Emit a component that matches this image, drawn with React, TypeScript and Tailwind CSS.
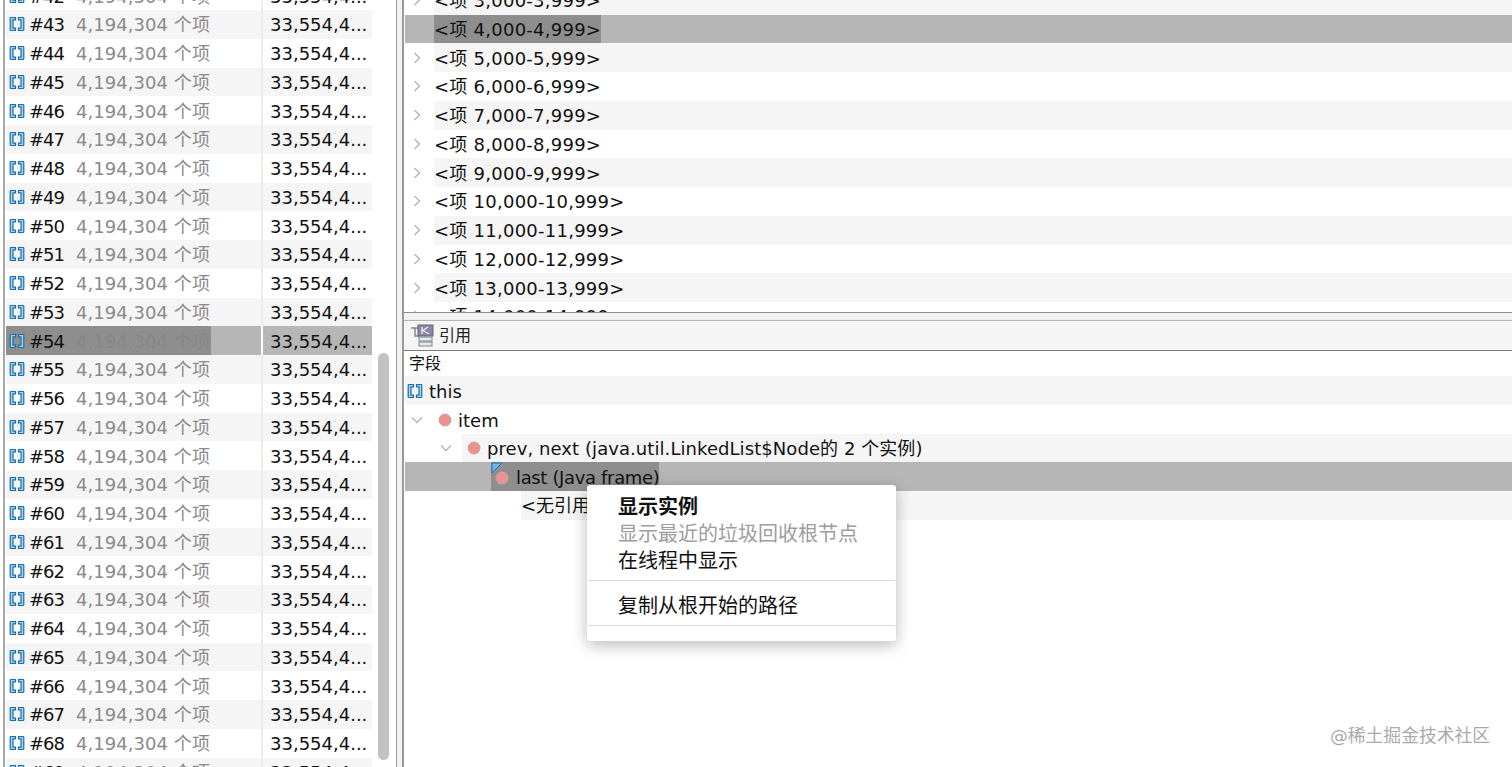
const leftRows = Array.from({ length: 28 }, (_, i) => 42 + i)
const treeRows = [3, 4, 5, 6, 7, 8, 9, 10, 11, 12, 13, 14]

function ArrayIcon() {
  return (
    <svg width="16" height="16" viewBox="0 0 16 16" fill="none" className="shrink-0">
      <path d="M6.5 1.5H2a.8.8 0 0 0-.8.8v11.4a.8.8 0 0 0 .8.8h4.5v-2.3H4V3.8h2.5z" fill="#9fd2ef" stroke="#1d6ea8" strokeWidth="1.2" />
      <path d="M9.5 1.5H14a.8.8 0 0 1 .8.8v11.4a.8.8 0 0 1-.8.8H9.5v-2.3H12V3.8H9.5z" fill="#9fd2ef" stroke="#1d6ea8" strokeWidth="1.2" />
    </svg>
  )
}

function Dot() {
  return (
    <svg width="14" height="14" viewBox="0 0 14 14" className="shrink-0">
      <circle cx="7" cy="7" r="5.8" fill="#f0908e" stroke="#c5a3a3" strokeWidth="1.2" />
    </svg>
  )
}

function Chevron({ open }: { open?: boolean }) {
  return (
    <svg width="12" height="12" viewBox="0 0 12 12" fill="none" stroke="#b4b4b4" strokeWidth="1.4" className="shrink-0">
      {open ? <path d="M1 3.5 6 8.5 11 3.5" /> : <path d="M3.5 1 8.5 6 3.5 11" />}
    </svg>
  )
}

function RefsIcon() {
  return (
    <svg width="24" height="24" viewBox="0 0 24 24" className="shrink-0">
      <path d="M1 4h8M5 4v8h4" fill="none" stroke="#7a8791" strokeWidth="1.4" />
      <rect x="8" y="1" width="15" height="11" fill="#8f84a6" stroke="#5f6670" />
      <path d="M12 3v7M18 3l-5 3.5 6 3.5" fill="none" stroke="#e8eef5" strokeWidth="1.4" />
      <rect x="9" y="13" width="13" height="4" fill="#e6e9ec" stroke="#7d868d" />
      <rect x="9" y="18" width="13" height="4" fill="#e6e9ec" stroke="#7d868d" />
    </svg>
  )
}

function LeftRow({ n }: { n: number }) {
  const selected = n === 54
  const band = n % 2 === 1 ? "bg-[#f5f5f5]" : "bg-white"
  return (
    <div className="flex h-[28.75px] shrink-0 items-center">
      <div className={`flex h-full w-[205px] items-center pl-[3px] ${selected ? "bg-[#8e8e8e]" : band}`}>
        <ArrayIcon />
        <span className="ml-[4px] mt-[2px] w-[47px] tracking-[-1px] text-[#111]">#{n}</span>
        <span className={`mt-[2px] tracking-[0.05px] ${selected ? "text-[#878787]" : "text-[#8a8a8a]"}`}>4,194,304 个项</span>
      </div>
      <div className={`h-full w-[50px] ${selected ? "bg-[#b6b6b6]" : band}`} />
      <div className={`h-full w-[2px] ${selected ? "bg-white" : "bg-[#ececec]"}`} />
      <div className={`flex h-full w-[109px] items-center pl-[7px] pt-[2px] text-[#111] ${selected ? "bg-[#b6b6b6]" : band}`}>
        33,554,4...
      </div>
    </div>
  )
}

function TreeRow({ k }: { k: number }) {
  const selected = k === 4
  const band = k % 2 === 1 ? "bg-[#f5f5f5]" : "bg-white"
  return (
    <div className={`flex h-[28.75px] shrink-0 items-center ${selected ? "bg-[#b6b6b6]" : ""}`}>
      <div className="flex w-[29px] shrink-0 justify-center pr-[5px]">{!selected && <Chevron />}</div>
      <div className={`flex h-full items-center whitespace-nowrap pt-[2px] tracking-[0.25px] text-[#111] ${selected ? "w-[167px] bg-[#8e8e8e]" : `flex-1 ${band}`}`}>
        {`<项 ${k},000-${k},999>`}
      </div>
    </div>
  )
}

export default function App() {
  return (
    <div className="relative flex h-[767px] w-[1512px] overflow-hidden bg-white font-['DejaVu_Sans','Noto_Sans_CJK_SC',sans-serif] text-[18px] leading-none">
      {/* left table */}
      <div className="flex w-[397px] shrink-0 border-r border-[#9a9a9a] bg-white">
        <div className="ml-[3px] w-[3px] shrink-0 border-l-2 border-[#a8a8a8]" />
        <div className="-mt-[18.75px] flex w-[366px] shrink-0 flex-col">
          {leftRows.map((n) => (
            <LeftRow key={n} n={n} />
          ))}
        </div>
        <div className="ml-[6px] mt-[353px] mb-[7px] w-[11px] rounded-full bg-[#c2c2c2]" />
      </div>

      <div className="w-[5px] shrink-0 bg-[#f2f2f2]" />

      {/* right side */}
      <div className="flex min-w-0 flex-1 flex-col border-l-2 border-[#9a9a9a]">
        <div className="h-[313px] shrink-0 overflow-hidden border-b border-[#8e8e8e] pl-px">
          <div className="-mt-[14.25px] flex flex-col">
            {treeRows.map((k) => (
              <TreeRow key={k} k={k} />
            ))}
          </div>
        </div>

        <div className="h-[7px] shrink-0 bg-[#f2f2f2]" />

        <div className="flex h-[31px] shrink-0 items-center gap-[5px] border-y border-t-[#b5b5b5] border-b-[#7d7d7d] bg-[#f5f5f5] pl-[6px] text-[16px] text-[#222]">
          <RefsIcon />
          引用
        </div>

        <div className="flex min-h-0 flex-1 flex-col pl-px">
          <div className="flex h-[25px] shrink-0 items-center pl-[4px] text-[16px] text-[#111]">字段</div>
          <div className="flex h-[29px] shrink-0 items-center bg-[#f5f5f5] pl-[2px] text-[#111]">
            <ArrayIcon />
            <span className="ml-[6px] mt-[2px]">this</span>
          </div>
          <div className="flex h-[29px] shrink-0 items-center pl-[6px] text-[#111]">
            <Chevron open />
            <span className="ml-[15px]"><Dot /></span>
            <span className="ml-[6px] mt-[2px]">item</span>
          </div>
          <div className="flex h-[28px] shrink-0 items-center pl-[35px] text-[#111]">
            <Chevron open />
            <div className="ml-[10px] flex h-full flex-1 items-center bg-[#f5f5f5] pl-[5px]">
              <Dot />
              <span className="ml-[6px] mt-[2px] tracking-[0.07px]">prev, next (java.util.LinkedList$Node的 2 个实例)</span>
            </div>
          </div>
          <div className="flex h-[29px] shrink-0 items-center bg-[#b6b6b6] pl-[86px] text-[#111]">
            <div className="relative flex h-full w-[168px] items-center bg-[#8e8e8e] pl-[4px]">
              <svg width="12" height="12" viewBox="0 0 12 12" className="absolute left-0 top-0">
                <path d="M1 1h10L1 11z" fill="#6fb4ea" stroke="#2b6ea6" />
              </svg>
              <span className="mt-[3px]"><Dot /></span>
              <span className="ml-[7px] mt-[2px] whitespace-nowrap tracking-[-0.35px]">last (Java frame)</span>
            </div>
          </div>
          <div className="flex h-[29px] shrink-0 items-center pl-[116px] text-[#111]">
            <div className="flex h-full flex-1 items-center bg-[#f5f5f5]">{"<无引用>"}</div>
          </div>
        </div>
      </div>

      {/* context menu */}
      <div className="absolute left-[587px] top-[485px] flex h-[156px] w-[309px] flex-col rounded-[3px] bg-white pt-[8px] text-[20px] text-[#111] shadow-[0_4px_16px_rgba(0,0,0,0.28)]">
        <div className="flex h-[27px] items-center pl-[31px] font-bold">显示实例</div>
        <div className="flex h-[27px] items-center pl-[31px] text-[#9d9d9d]">显示最近的垃圾回收根节点</div>
        <div className="flex h-[27px] items-center pl-[31px]">在线程中显示</div>
        <div className="mx-px mt-[6px] h-px bg-[#d9d9d9]" />
        <div className="flex h-[44px] items-center pl-[31px] pt-[5px]">复制从根开始的路径</div>
        <div className="mx-px h-px bg-[#d9d9d9]" />
      </div>

      {/* watermark */}
      <div className="absolute left-[1330px] top-[727px] text-[17.8px] text-[#aaaaaa]">@稀土掘金技术社区</div>
    </div>
  )
}
